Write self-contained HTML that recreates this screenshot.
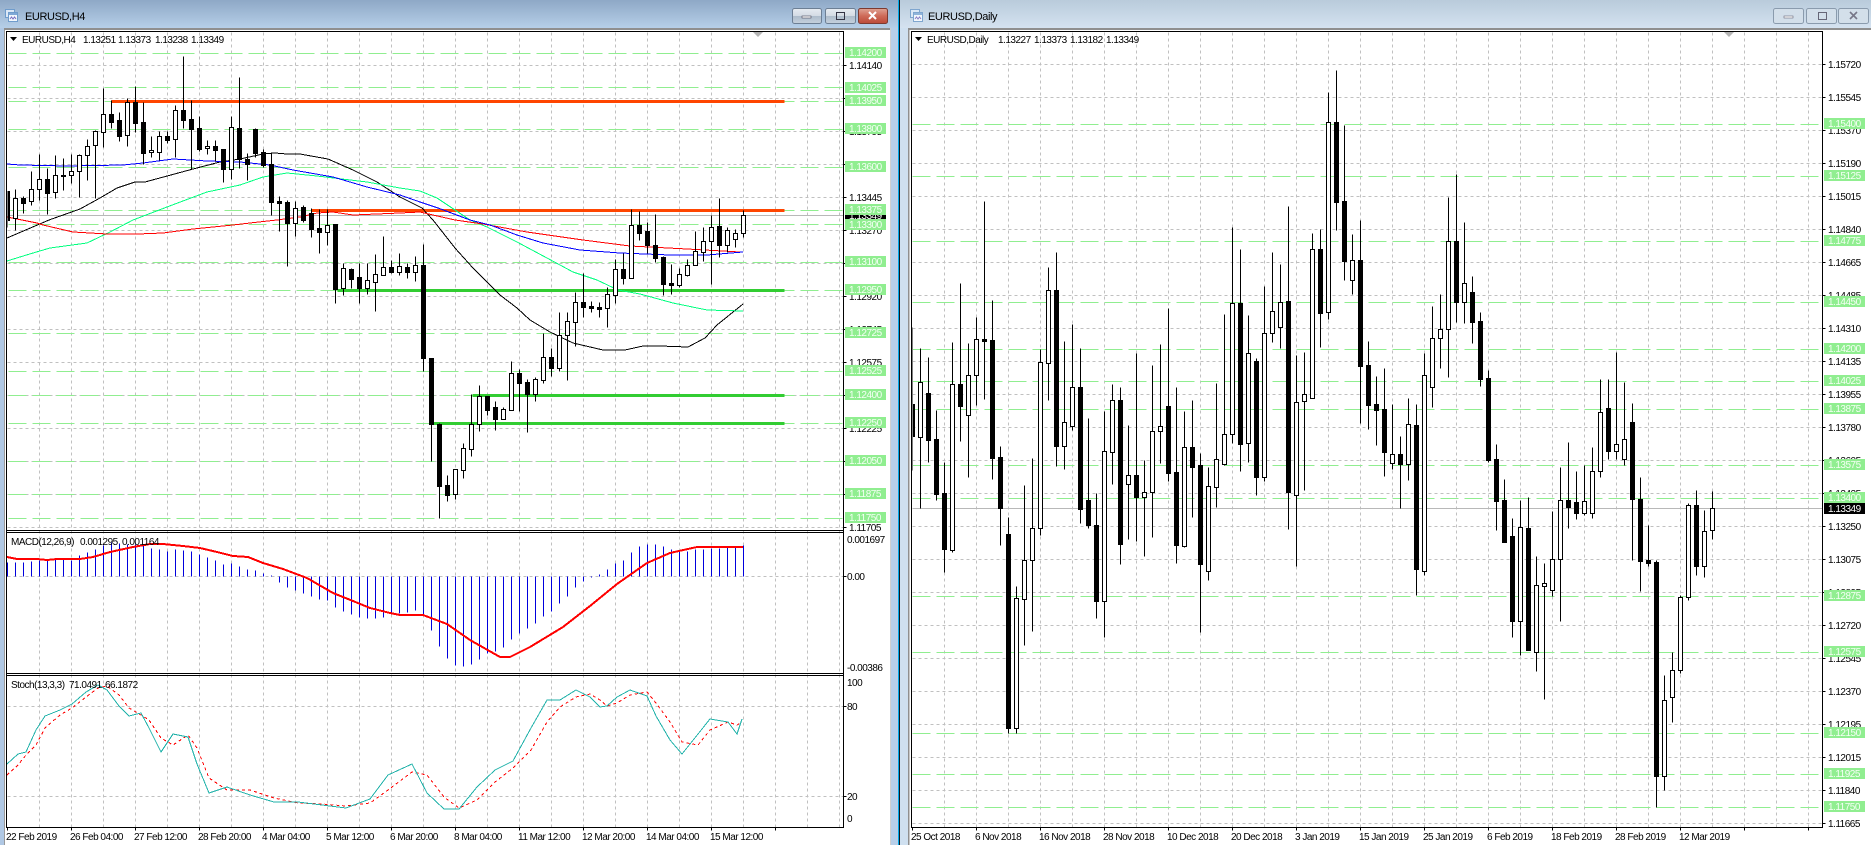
<!DOCTYPE html>
<html>
<head>
<meta charset="utf-8">
<title>EURUSD</title>
<style>
html,body{margin:0;padding:0;background:#fff;width:1871px;height:845px;overflow:hidden}
svg{display:block}
text{font-family:"Liberation Sans",sans-serif;font-size:10px;letter-spacing:-.5px;fill:#000}
.t{font-size:11px;letter-spacing:-.4px}
.w{fill:#fff}
.g{fill:#f4fff4}
</style>
</head>
<body>
<svg width="1871" height="845" viewBox="0 0 1871 845" xmlns="http://www.w3.org/2000/svg">
<defs>
<linearGradient id="a" x1="0" y1="0" x2="0" y2="1"><stop offset="0" stop-color="#8ea8c6"/><stop offset="1" stop-color="#b6cfe8"/></linearGradient>
<linearGradient id="b" x1="0" y1="0" x2="0" y2="1"><stop offset="0" stop-color="#b9cbdb"/><stop offset="1" stop-color="#d4e2f0"/></linearGradient>
<linearGradient id="c" x1="0" y1="0" x2="0" y2="1"><stop offset="0" stop-color="#e6ebf1"/><stop offset=".5" stop-color="#d3dbe4"/><stop offset=".51" stop-color="#aebccb"/><stop offset="1" stop-color="#c5d1dd"/></linearGradient>
<linearGradient id="d" x1="0" y1="0" x2="0" y2="1"><stop offset="0" stop-color="#dfa394"/><stop offset=".5" stop-color="#ce6a58"/><stop offset="1" stop-color="#bb4a38"/></linearGradient>
<clipPath id="l1"><rect x="7" y="32" width="836" height="498"/></clipPath>
<clipPath id="l2"><rect x="7" y="533" width="836" height="140"/></clipPath>
<clipPath id="l3"><rect x="7" y="676" width="836" height="151"/></clipPath>
<clipPath id="r1"><rect x="912" y="32" width="910" height="795"/></clipPath>
</defs>

<!-- window chrome -->
<rect x="0" y="0" width="899" height="28" fill="url(#a)"/>
<rect x="899" y="0" width="972" height="28" fill="url(#b)"/>
<rect x="0" y="28" width="5" height="817" fill="#b0c8e4"/>
<rect x="4" y="28" width="1" height="817" fill="#9a9a9a"/>
<rect x="890" y="28" width="1" height="817" fill="#d0d0d0"/>
<rect x="891" y="28" width="7" height="817" fill="#b7cfe9"/>
<rect x="898" y="0" width="1" height="845" fill="#00a8e8"/>
<rect x="899" y="0" width="1" height="845" fill="#101820"/>
<rect x="900" y="28" width="8" height="817" fill="#cfe0f0"/>
<rect x="908" y="28" width="1.5" height="817" fill="#8f8f8f"/>
<rect x="4" y="28" width="886" height="2" fill="#8f8f8f"/>
<rect x="908" y="28" width="963" height="2" fill="#8f8f8f"/>

<!-- title text + icons -->
<g>
<rect x="5.5" y="9.5" width="9" height="8" fill="#dbe8f6" stroke="#6f9ccc"/>
<rect x="8.5" y="12.5" width="9" height="9" fill="#f2f7fc" stroke="#6f9ccc"/>
<rect x="9" y="13" width="8" height="2" fill="#7fa8d6"/>
<path d="M10 19l1.500-2 1.500 2 1.500-2 1.500 2" fill="none" stroke="#7a6fc0"/>
<rect x="910.500" y="9.500" width="9" height="8" fill="#dbe8f6" stroke="#7fa6cf"/>
<rect x="913.500" y="12.500" width="9" height="9" fill="#f2f7fc" stroke="#7fa6cf"/>
<rect x="914" y="13" width="8" height="2" fill="#8fb4da"/>
<path d="M915 19l1.500-2 1.500 2 1.500-2 1.500 2" fill="none" stroke="#8a80c8"/>
</g>
<text class="t" x="25" y="20">EURUSD,H4</text>
<text class="t" x="928" y="20">EURUSD,Daily</text>

<!-- buttons -->
<rect x="792.500" y="8.500" width="29" height="15" rx="2" fill="url(#c)" stroke="#6d7f94"/>
<rect x="825.500" y="8.500" width="30" height="15" rx="2" fill="url(#c)" stroke="#6d7f94"/>
<rect x="858.500" y="8.500" width="29" height="15" rx="2" fill="url(#d)" stroke="#7d3a30"/>
<rect x="802" y="16" width="9" height="2" fill="#fff" stroke="#445" stroke-width=".6"/>
<rect x="836.500" y="12.500" width="8" height="7" fill="none" stroke="#334" />
<path d="M869 12l7 7M876 12l-7 7" stroke="#fff" stroke-width="2"/>
<rect x="1773.500" y="8.500" width="30" height="15" rx="2" fill="#d3dfea" stroke="#8a9bad"/>
<rect x="1806.500" y="8.500" width="30" height="15" rx="2" fill="#d3dfea" stroke="#8a9bad"/>
<rect x="1838.500" y="8.500" width="30" height="15" rx="2" fill="#d3dfea" stroke="#8a9bad"/>
<rect x="1784" y="16" width="9" height="2" fill="#fff" stroke="#667" stroke-width=".6"/>
<rect x="1818.500" y="12.500" width="8" height="7" fill="none" stroke="#667"/>
<path d="M1850 12l7 7M1857 12l-7 7" stroke="#778" stroke-width="1.600"/>

<g shape-rendering="crispEdges" transform="translate(.5,.5)">
<!-- LEFT grid -->
<path fill="none" stroke="#c0c0c0" stroke-dasharray="3 3" d="M39 32V827M71 32V827M103 32V827M135 32V827M167 32V827M199 32V827M231 32V827M263 32V827M295 32V827M327 32V827M359 32V827M391 32V827M423 32V827M455 32V827M487 32V827M519 32V827M551 32V827M583 32V827M615 32V827M647 32V827M679 32V827M711 32V827M743 32V827M775 32V827M807 32V827M839 32V827
M7 65H843M7 98H843M7 131H843M7 164H843M7 197H843M7 230H843M7 263H843M7 296H843M7 329H843M7 362H843M7 395H843M7 428H843M7 461H843M7 494H843M7 527H843M7 576H843M7 706H843M7 796H843"/>
<path fill="none" stroke="#b8b8b8" d="M7 215H843"/>
<!-- LEFT green levels -->
<path fill="none" stroke="#90ee90" stroke-dasharray="18 6" d="M8 53H843M8 87H843M8 101H843M8 129H843M8 167H843M8 210H843M8 224H843M8 262H843M8 290H843M8 333H843M8 371H843M8 395H843M8 423H843M8 461H843M8 494H843M8 518H843"/>
<!-- objects -->
<path fill="none" stroke="#ff4500" stroke-width="3" d="M111 101H784M311 210H784"/>
<path fill="none" stroke="#32cd32" stroke-width="3" d="M337 290H784M472 395H784M433 423H784"/>
</g>

<g clip-path="url(#l1)" fill="none" shape-rendering="crispEdges">
<polyline stroke="#000" points="7,238 49,220 80,209 100,198 117,188 135,182 145,182 193,169 220,162 240,159 263,154 275,153 287,154 300,154 328,159 353,170 377,182 400,197 410,202 422,208 433,220 455,248 473,268 493,288 500,295 517,308 530,320 550,332 573,343 603,350 625,350 643,346 660,346 688,347 705,338 717,325 743,304"/>
<polyline stroke="#00ff7f" points="7,261 33,253 50,248 87,243 110,232 133,220 167,207 207,192 240,185 263,177 287,173 317,176 367,182 400,188 420,191 437,198 452,208 470,220 487,227 517,242 547,258 573,272 597,280 618,290 640,294 673,303 707,310 743,311"/>
<polyline stroke="#ff0000" points="7,217 22,220 37,223 43,225 73,232 107,234 138,234 163,233 193,229 233,225 250,223 277,220 300,217 317,213 333,212 353,215 400,213 420,212 433,215 455,220 483,224 527,232 583,240 630,246 687,249 740,252"/>
<polyline stroke="#0000ff" points="7,164 20,165 67,166 123,165 143,163 173,159 207,161 240,162 270,165 293,170 333,177 367,187 400,195 420,202 438,208 470,220 490,225 517,235 543,243 580,250 620,253 670,255 707,255 743,252"/>
</g>

<g shape-rendering="crispEdges" transform="translate(.5,.5)" clip-path="url(#l1)">
<!-- LEFT wicks -->
<path fill="none" stroke="#000" d="M7 191V227M15 189V230M23 196V213M31 171V205M39 154V200M47 168V214M55 155V198M63 158V190M71 154V183M79 154V197M87 139V180M95 130V198M103 88V147M111 100V128M119 112V141M127 98V146M135 86V132M143 102V164M151 136V157M159 131V160M167 131V143M175 105V157M183 56V128M191 100V169M199 116V151M207 140V154M215 140V161M223 149V182M231 116V179M239 77V168M247 153V180M255 128V157M263 149V167M271 152V215M279 196V231M287 200V266M295 201V236M303 205V222M311 208V237M319 209V253M327 209V245M335 224V303M343 263V295M351 268V288M359 263V303M367 263V294M375 254V311M383 236V275M391 260V273M399 253V275M407 263V278M415 256V281M423 244V371M431 358V461M439 423V518M447 475V501M455 469V499M463 443V478M471 394V456M479 385V431M487 396V415M495 401V430M503 407V419M511 361V410M519 369V411M527 379V432M535 377V401M543 333V383M551 348V376M559 312V371M567 312V380M575 292V346M583 273V317M591 301V312M599 302V317M607 287V327M615 259V303M623 253V284M631 209V278M639 211V240M647 222V253M655 214V262M663 256V295M671 264V294M679 268V287M687 259V276M695 231V265M703 227V261M711 215V284M719 198V257M727 227V252M735 229V247M743 210V237"/>
<!-- LEFT white bodies -->
<path fill="#fff" stroke="#000" d="M13 198h4V218h-4zM29 189h4V201h-4zM37 179h4V189h-4zM53 175h4V192h-4zM69 171h4V175h-4zM77 155h4V171h-4zM85 146h4V155h-4zM93 131h4V145h-4zM101 114h4V132h-4zM125 102h4V135h-4zM149 150h4V152h-4zM157 136h4V152h-4zM173 110h4V139h-4zM205 146h4V148h-4zM229 127h4V169h-4zM293 208h4V223h-4zM325 225h4V232h-4zM341 268h4V288h-4zM365 280h4V288h-4zM373 274h4V282h-4zM381 267h4V275h-4zM397 266h4V272h-4zM413 265h4V272h-4zM453 469h4V494h-4zM461 448h4V470h-4zM469 424h4V449h-4zM477 396h4V424h-4zM501 409h4V419h-4zM509 373h4V410h-4zM533 379h4V394h-4zM541 357h4V380h-4zM557 335h4V368h-4zM565 321h4V335h-4zM573 302h4V322h-4zM605 294h4V308h-4zM613 269h4V295h-4zM629 225h4V278h-4zM677 274h4V285h-4zM685 265h4V275h-4zM693 251h4V265h-4zM701 241h4V252h-4zM709 227h4V241h-4zM725 230h4V245h-4zM733 233h4V239h-4zM741 215h4V233h-4z"/>
<!-- LEFT black bodies -->
<path fill="#000" stroke="#000" d="M5 191h4V220h-4zM21 198h4V203h-4zM45 179h4V193h-4zM61 175h4V176h-4zM109 114h4V122h-4zM117 120h4V136h-4zM133 102h4V123h-4zM141 122h4V153h-4zM165 136h4V140h-4zM181 110h4V120h-4zM189 119h4V129h-4zM197 128h4V149h-4zM213 146h4V150h-4zM221 149h4V169h-4zM237 128h4V159h-4zM245 159h4V164h-4zM253 129h4V153h-4zM261 152h4V165h-4zM269 164h4V202h-4zM277 201h4V203h-4zM285 202h4V223h-4zM301 207h4V220h-4zM309 213h4V229h-4zM317 228h4V232h-4zM333 224h4V289h-4zM349 269h4V279h-4zM357 277h4V288h-4zM389 267h4V272h-4zM405 267h4V272h-4zM421 265h4V358h-4zM429 358h4V424h-4zM437 424h4V486h-4zM445 485h4V495h-4zM485 396h4V410h-4zM493 407h4V419h-4zM517 373h4V383h-4zM525 382h4V394h-4zM549 357h4V368h-4zM581 302h4V307h-4zM589 306h4V308h-4zM597 307h4V309h-4zM621 269h4V278h-4zM637 225h4V233h-4zM645 231h4V245h-4zM653 245h4V258h-4zM661 257h4V284h-4zM669 283h4V285h-4zM717 226h4V245h-4z"/>
</g>

<!-- MACD -->
<g shape-rendering="crispEdges" transform="translate(.5,.5)">
<path fill="none" stroke="#0000dd" d="M7 576V562M15 576V562M23 576V562M31 576V561M39 576V560M47 576V560M55 576V558M63 576V559M71 576V560M79 576V555M87 576V552M95 576V549M103 576V545M111 576V542M119 576V543M127 576V544M135 576V544M143 576V545M151 576V548M159 576V549M167 576V551M175 576V549M183 576V550M191 576V551M199 576V554M207 576V557M215 576V560M223 576V564M231 576V563M239 576V566M247 576V569M255 576V570M263 576V573M271 576V575M279 576V582M287 576V587M295 576V590M303 576V593M311 576V596M319 576V599M327 576V600M335 576V607M343 576V611M351 576V614M359 576V617M367 576V618M375 576V618M383 576V617M391 576V614M399 576V613M407 576V612M415 576V610M423 576V614M431 576V630M439 576V646M447 576V658M455 576V665M463 576V666M471 576V664M479 576V659M487 576V653M495 576V651M503 576V647M511 576V639M519 576V633M527 576V628M535 576V623M543 576V616M551 576V611M559 576V603M567 576V596M575 576V587M583 576V581M591 576V577M599 576V574M607 576V569M615 576V563M623 576V560M631 576V552M639 576V546M647 576V544M655 576V544M663 576V546M671 576V549M679 576V550M687 576V551M695 576V549M703 576V549M711 576V548M719 576V548M727 576V547M735 576V547M743 576V545"/>
</g>
<polyline clip-path="url(#l2)" fill="none" stroke="#ff0000" stroke-width="2" shape-rendering="crispEdges" points="7,557 17,559 37,559 47,560 57,559 80,559 93,557 110,552 133,547 150,544 163,544 183,546 200,548 217,552 233,556 248,557 263,563 283,569 307,578 333,593 353,601 370,608 390,613 400,615 423,615 447,624 470,640 500,657 510,657 530,647 563,627 590,606 617,584 647,563 670,553 697,547 743,547"/>

<!-- Stoch -->
<g clip-path="url(#l3)" fill="none" shape-rendering="crispEdges">
<polyline stroke="#ff0000" stroke-dasharray="3 3" points="7,775 18,765 26,755 36,745 45,728 60,715 72,708 86,697 98,688 107,686 119,695 129,708 141,715 149,720 161,738 173,745 188,735 197,748 209,778 227,790 250,790 274,798 298,803 322,804 346,806 370,803 388,790 412,772 427,775 444,797 459,808 477,800 495,782 513,768 531,750 547,722 560,707 576,697 590,694 600,700 607,706 617,703 630,695 647,692 656,703 670,722 682,742 698,745 710,730 728,722 737,725 742,722"/>
<polyline stroke="#20b2aa" points="7,764 18,754 26,752 36,730 45,716 60,710 72,704 86,692 98,685 107,690 119,706 129,716 141,713 149,728 161,752 173,734 188,737 197,764 209,793 227,787 250,795 274,802 298,802 322,805 346,808 370,799 388,775 412,764 427,793 444,809 459,809 477,787 495,770 513,761 531,728 547,700 560,700 576,690 590,697 600,707 607,706 617,697 630,690 647,696 656,716 670,740 682,754 698,734 710,719 728,722 737,734 742,719"/>
</g>

<!-- LEFT frames -->
<g shape-rendering="crispEdges" transform="translate(.5,.5)" fill="none" stroke="#000">
<path d="M6 31H843V827H6ZM6 530H843M6 532H843M6 673H843M6 675H843"/>
<path d="M843 65h3M843 98h3M843 131h3M843 164h3M843 197h3M843 230h3M843 263h3M843 296h3M843 329h3M843 362h3M843 395h3M843 428h3M843 461h3M843 494h3M843 527h3M843 576h3M843 706h3M843 796h3
M7 827v3M71 827v3M135 827v3M199 827v3M263 827v3M327 827v3M391 827v3M455 827v3M519 827v3M583 827v3M647 827v3M711 827v3M775 827v3"/>
</g>
<path d="M753 32h10l-5 5z" fill="#b4b4b4"/>

<!-- LEFT axis black labels -->
<text x="849" y="69">1.14140</text><text x="849" y="102">1.13965</text><text x="849" y="135">1.13795</text><text x="849" y="168">1.13620</text><text x="849" y="201">1.13445</text><text x="849" y="234">1.13270</text><text x="849" y="267">1.13095</text><text x="849" y="300">1.12920</text><text x="849" y="333">1.12745</text><text x="849" y="366">1.12575</text><text x="849" y="399">1.12400</text><text x="849" y="432">1.12225</text><text x="849" y="465">1.12050</text><text x="849" y="498">1.11875</text><text x="849" y="531">1.11705</text>
<rect x="845" y="210" width="41" height="11" fill="#000"/><text class="w" x="849" y="219">1.13349</text>
<!-- LEFT green labels -->
<g fill="#90ee90">
<rect x="845" y="47" width="41" height="11"/><rect x="845" y="82" width="41" height="11"/><rect x="845" y="95" width="41" height="11"/><rect x="845" y="123" width="41" height="11"/><rect x="845" y="161" width="41" height="11"/><rect x="845" y="204" width="41" height="11"/><rect x="845" y="219" width="41" height="11"/><rect x="845" y="256" width="41" height="11"/><rect x="845" y="284" width="41" height="11"/><rect x="845" y="327" width="41" height="11"/><rect x="845" y="365" width="41" height="11"/><rect x="845" y="389" width="41" height="11"/><rect x="845" y="417" width="41" height="11"/><rect x="845" y="455" width="41" height="11"/><rect x="845" y="488" width="41" height="11"/><rect x="845" y="512" width="41" height="11"/>
</g>
<g class="lbl">
<text class="g" x="849" y="56">1.14200</text><text class="g" x="849" y="91">1.14025</text><text class="g" x="849" y="104">1.13950</text><text class="g" x="849" y="132">1.13800</text><text class="g" x="849" y="170">1.13600</text><text class="g" x="849" y="213">1.13375</text><text class="g" x="849" y="228">1.13300</text><text class="g" x="849" y="265">1.13100</text><text class="g" x="849" y="293">1.12950</text><text class="g" x="849" y="336">1.12725</text><text class="g" x="849" y="374">1.12525</text><text class="g" x="849" y="398">1.12400</text><text class="g" x="849" y="426">1.12250</text><text class="g" x="849" y="464">1.12050</text><text class="g" x="849" y="497">1.11875</text><text class="g" x="849" y="521">1.11750</text>
</g>
<text x="847" y="543">0.001697</text><text x="847" y="580">0.00</text><text x="847" y="671">-0.00386</text>
<text x="847" y="686">100</text><text x="847" y="710">80</text><text x="847" y="800">20</text><text x="847" y="822">0</text>

<!-- LEFT legends -->
<path d="M10 37h7l-3.500 4z" fill="#000"/>
<text x="22" y="43">EURUSD,H4</text><text x="83" y="43">1.13251</text><text x="118" y="43">1.13373</text><text x="155" y="43">1.13238</text><text x="191" y="43">1.13349</text>
<text x="11" y="545">MACD(12,26,9)</text><text x="80" y="545">0.001295</text><text x="122" y="545">0.001164</text>
<text x="11" y="688">Stoch(13,3,3)</text><text x="69" y="688">71.0491</text><text x="105" y="688">66.1872</text>

<!-- LEFT dates -->
<text x="6" y="840">22 Feb 2019</text><text x="70" y="840">26 Feb 04:00</text><text x="134" y="840">27 Feb 12:00</text><text x="198" y="840">28 Feb 20:00</text><text x="262" y="840">4 Mar 04:00</text><text x="326" y="840">5 Mar 12:00</text><text x="390" y="840">6 Mar 20:00</text><text x="454" y="840">8 Mar 04:00</text><text x="518" y="840">11 Mar 12:00</text><text x="582" y="840">12 Mar 20:00</text><text x="646" y="840">14 Mar 04:00</text><text x="710" y="840">15 Mar 12:00</text>

<!-- RIGHT chart -->
<g shape-rendering="crispEdges" transform="translate(.5,.5)">
<path fill="none" stroke="#c0c0c0" stroke-dasharray="3 3" d="M944 32V827M976 32V827M1008 32V827M1040 32V827M1072 32V827M1104 32V827M1136 32V827M1168 32V827M1200 32V827M1232 32V827M1264 32V827M1296 32V827M1328 32V827M1360 32V827M1392 32V827M1424 32V827M1456 32V827M1488 32V827M1520 32V827M1552 32V827M1584 32V827M1616 32V827M1648 32V827M1680 32V827M1712 32V827M1744 32V827M1776 32V827M1808 32V827
M912 64H1822M912 97H1822M912 130H1822M912 163H1822M912 196H1822M912 229H1822M912 262H1822M912 295H1822M912 328H1822M912 361H1822M912 394H1822M912 427H1822M912 460H1822M912 493H1822M912 526H1822M912 559H1822M912 592H1822M912 625H1822M912 658H1822M912 691H1822M912 724H1822M912 757H1822M912 790H1822M912 823H1822"/>
<path fill="none" stroke="#b8b8b8" d="M912 508H1822"/>
<path fill="none" stroke="#90ee90" stroke-dasharray="18 6" d="M912 124H1822M912 176H1822M912 241H1822M912 302H1822M912 349H1822M912 381H1822M912 409H1822M912 465H1822M912 498H1822M912 596H1822M912 652H1822M912 733H1822M912 774H1822M912 807H1822"/>
<g clip-path="url(#r1)">
<path fill="none" stroke="#000" d="M912 327V470M920 348V508M928 357V462M936 410V500M944 462V572M952 342V552M960 283V441M968 343V477M976 317V405M984 201V399M992 300V479M1000 446V545M1008 517V733M1016 586V733M1024 485V645M1032 458V631M1040 349V535M1048 267V400M1056 252V466M1064 341V469M1072 324V430M1080 348V523M1088 418V528M1096 493V618M1104 411V637M1112 384V484M1120 387V564M1128 425V539M1136 353V541M1144 460V556M1152 365V537M1160 344V463M1168 308V481M1176 387V563M1184 411V547M1192 400V517M1200 453V632M1208 467V580M1216 383V507M1224 314V465M1232 227V443M1240 249V471M1248 315V462M1256 358V495M1264 286V481M1272 252V342M1280 264V348M1288 206V529M1296 355V566M1304 352V490M1312 233V398M1320 229V347M1328 92V319M1336 70V230M1344 125V280M1352 234V294M1360 220V423M1368 341V429M1376 376V445M1384 368V476M1392 404V469M1400 436V508M1408 398V480M1416 404V595M1424 353V575M1432 306V407M1440 294V368M1448 197V377M1456 174V322M1464 222V323M1472 276V343M1480 312V386M1488 370V462M1496 444V530M1504 479V542M1512 518V637M1520 500V655M1528 497V650M1536 556V671M1544 563V699M1552 511V596M1560 467V621M1568 442V528M1576 471V519M1584 465V515M1592 447V518M1600 379V477M1608 379V459M1616 352V459M1624 382V465M1632 403V560M1640 477V591M1648 525V566M1656 560V807M1664 675V790M1672 652V722M1680 595V673M1688 503V600M1696 490V575M1704 510V577M1712 491V539"/>
<path fill="#fff" stroke="#000" d="M918 382h4V437h-4zM950 384h4V550h-4zM966 375h4V415h-4zM974 339h4V375h-4zM1014 598h4V728h-4zM1022 560h4V599h-4zM1030 528h4V560h-4zM1038 362h4V528h-4zM1046 290h4V363h-4zM1062 422h4V446h-4zM1070 387h4V426h-4zM1102 451h4V601h-4zM1110 400h4V452h-4zM1126 475h4V484h-4zM1142 492h4V497h-4zM1150 431h4V492h-4zM1158 426h4V431h-4zM1182 447h4V546h-4zM1206 486h4V571h-4zM1214 459h4V487h-4zM1222 434h4V464h-4zM1230 303h4V434h-4zM1246 353h4V443h-4zM1262 333h4V477h-4zM1270 311h4V333h-4zM1278 302h4V327h-4zM1294 402h4V495h-4zM1302 394h4V401h-4zM1310 249h4V398h-4zM1326 122h4V312h-4zM1350 260h4V280h-4zM1390 454h4V463h-4zM1406 424h4V464h-4zM1422 375h4V571h-4zM1430 338h4V387h-4zM1438 329h4V338h-4zM1446 241h4V329h-4zM1462 283h4V302h-4zM1518 527h4V621h-4zM1534 585h4V652h-4zM1542 583h4V586h-4zM1550 559h4V590h-4zM1558 500h4V559h-4zM1582 501h4V513h-4zM1590 471h4V513h-4zM1598 412h4V471h-4zM1614 444h4V451h-4zM1622 439h4V459h-4zM1662 700h4V776h-4zM1670 670h4V697h-4zM1678 597h4V670h-4zM1686 505h4V597h-4zM1702 531h4V566h-4zM1710 508h4V530h-4z"/>
<path fill="#000" stroke="#000" d="M910 404h4V436h-4zM926 393h4V440h-4zM934 439h4V494h-4zM942 493h4V549h-4zM958 384h4V406h-4zM982 339h4V341h-4zM990 340h4V458h-4zM998 457h4V508h-4zM1006 534h4V728h-4zM1054 290h4V446h-4zM1078 387h4V509h-4zM1086 500h4V525h-4zM1094 525h4V601h-4zM1118 400h4V544h-4zM1134 475h4V497h-4zM1166 406h4V473h-4zM1174 472h4V545h-4zM1190 447h4V467h-4zM1198 465h4V564h-4zM1238 303h4V444h-4zM1254 361h4V477h-4zM1286 301h4V492h-4zM1318 249h4V313h-4zM1334 122h4V202h-4zM1342 201h4V261h-4zM1358 260h4V366h-4zM1366 365h4V405h-4zM1374 404h4V410h-4zM1382 409h4V452h-4zM1398 454h4V464h-4zM1414 425h4V569h-4zM1454 241h4V302h-4zM1470 292h4V322h-4zM1478 321h4V379h-4zM1486 378h4V460h-4zM1494 459h4V501h-4zM1502 500h4V542h-4zM1510 536h4V621h-4zM1526 528h4V650h-4zM1566 500h4V507h-4zM1574 502h4V513h-4zM1606 408h4V451h-4zM1630 422h4V499h-4zM1638 499h4V561h-4zM1646 560h4V563h-4zM1654 562h4V776h-4zM1694 505h4V566h-4z"/>
</g>
<path fill="none" stroke="#000" d="M911 31H1822V827H911Z"/>
<path fill="none" stroke="#000" d="M1822 64h3M1822 97h3M1822 130h3M1822 163h3M1822 196h3M1822 229h3M1822 262h3M1822 295h3M1822 328h3M1822 361h3M1822 394h3M1822 427h3M1822 460h3M1822 493h3M1822 526h3M1822 559h3M1822 592h3M1822 625h3M1822 658h3M1822 691h3M1822 724h3M1822 757h3M1822 790h3M1822 823h3
M912 827v3M976 827v3M1040 827v3M1104 827v3M1168 827v3M1232 827v3M1296 827v3M1360 827v3M1424 827v3M1488 827v3M1552 827v3M1616 827v3M1680 827v3M1744 827v3M1808 827v3"/>
</g>
<path d="M1724 32h10l-5 5z" fill="#b4b4b4"/>

<!-- RIGHT axis labels -->
<text x="1828" y="68">1.15720</text><text x="1828" y="101">1.15545</text><text x="1828" y="134">1.15370</text><text x="1828" y="167">1.15190</text><text x="1828" y="200">1.15015</text><text x="1828" y="233">1.14840</text><text x="1828" y="266">1.14665</text><text x="1828" y="299">1.14485</text><text x="1828" y="332">1.14310</text><text x="1828" y="365">1.14135</text><text x="1828" y="398">1.13955</text><text x="1828" y="431">1.13780</text><text x="1828" y="464">1.13605</text><text x="1828" y="497">1.13425</text><text x="1828" y="530">1.13250</text><text x="1828" y="563">1.13075</text><text x="1828" y="596">1.12895</text><text x="1828" y="629">1.12720</text><text x="1828" y="662">1.12545</text><text x="1828" y="695">1.12370</text><text x="1828" y="728">1.12195</text><text x="1828" y="761">1.12015</text><text x="1828" y="794">1.11840</text><text x="1828" y="827">1.11665</text>
<g fill="#90ee90">
<rect x="1824" y="118" width="41" height="11"/><rect x="1824" y="170" width="41" height="11"/><rect x="1824" y="235" width="41" height="11"/><rect x="1824" y="296" width="41" height="11"/><rect x="1824" y="343" width="41" height="11"/><rect x="1824" y="375" width="41" height="11"/><rect x="1824" y="403" width="41" height="11"/><rect x="1824" y="459" width="41" height="11"/><rect x="1824" y="492" width="41" height="11"/><rect x="1824" y="590" width="41" height="11"/><rect x="1824" y="646" width="41" height="11"/><rect x="1824" y="727" width="41" height="11"/><rect x="1824" y="768" width="41" height="11"/><rect x="1824" y="801" width="41" height="11"/>
</g>
<text class="g" x="1828" y="127">1.15400</text><text class="g" x="1828" y="179">1.15125</text><text class="g" x="1828" y="244">1.14775</text><text class="g" x="1828" y="305">1.14450</text><text class="g" x="1828" y="352">1.14200</text><text class="g" x="1828" y="384">1.14025</text><text class="g" x="1828" y="412">1.13875</text><text class="g" x="1828" y="468">1.13575</text><text class="g" x="1828" y="501">1.13400</text><text class="g" x="1828" y="599">1.12875</text><text class="g" x="1828" y="655">1.12575</text><text class="g" x="1828" y="736">1.12150</text><text class="g" x="1828" y="777">1.11925</text><text class="g" x="1828" y="810">1.11750</text>
<rect x="1824" y="503" width="41" height="11" fill="#000"/><text class="w" x="1828" y="512">1.13349</text>

<!-- RIGHT legend -->
<path d="M915 37h7l-3.500 4z" fill="#000"/>
<text x="927" y="43">EURUSD,Daily</text><text x="998" y="43">1.13227</text><text x="1034" y="43">1.13373</text><text x="1070" y="43">1.13182</text><text x="1106" y="43">1.13349</text>

<!-- RIGHT dates -->
<text x="911" y="840">25 Oct 2018</text><text x="975" y="840">6 Nov 2018</text><text x="1039" y="840">16 Nov 2018</text><text x="1103" y="840">28 Nov 2018</text><text x="1167" y="840">10 Dec 2018</text><text x="1231" y="840">20 Dec 2018</text><text x="1295" y="840">3 Jan 2019</text><text x="1359" y="840">15 Jan 2019</text><text x="1423" y="840">25 Jan 2019</text><text x="1487" y="840">6 Feb 2019</text><text x="1551" y="840">18 Feb 2019</text><text x="1615" y="840">28 Feb 2019</text><text x="1679" y="840">12 Mar 2019</text>
</svg>
</body>
</html>
